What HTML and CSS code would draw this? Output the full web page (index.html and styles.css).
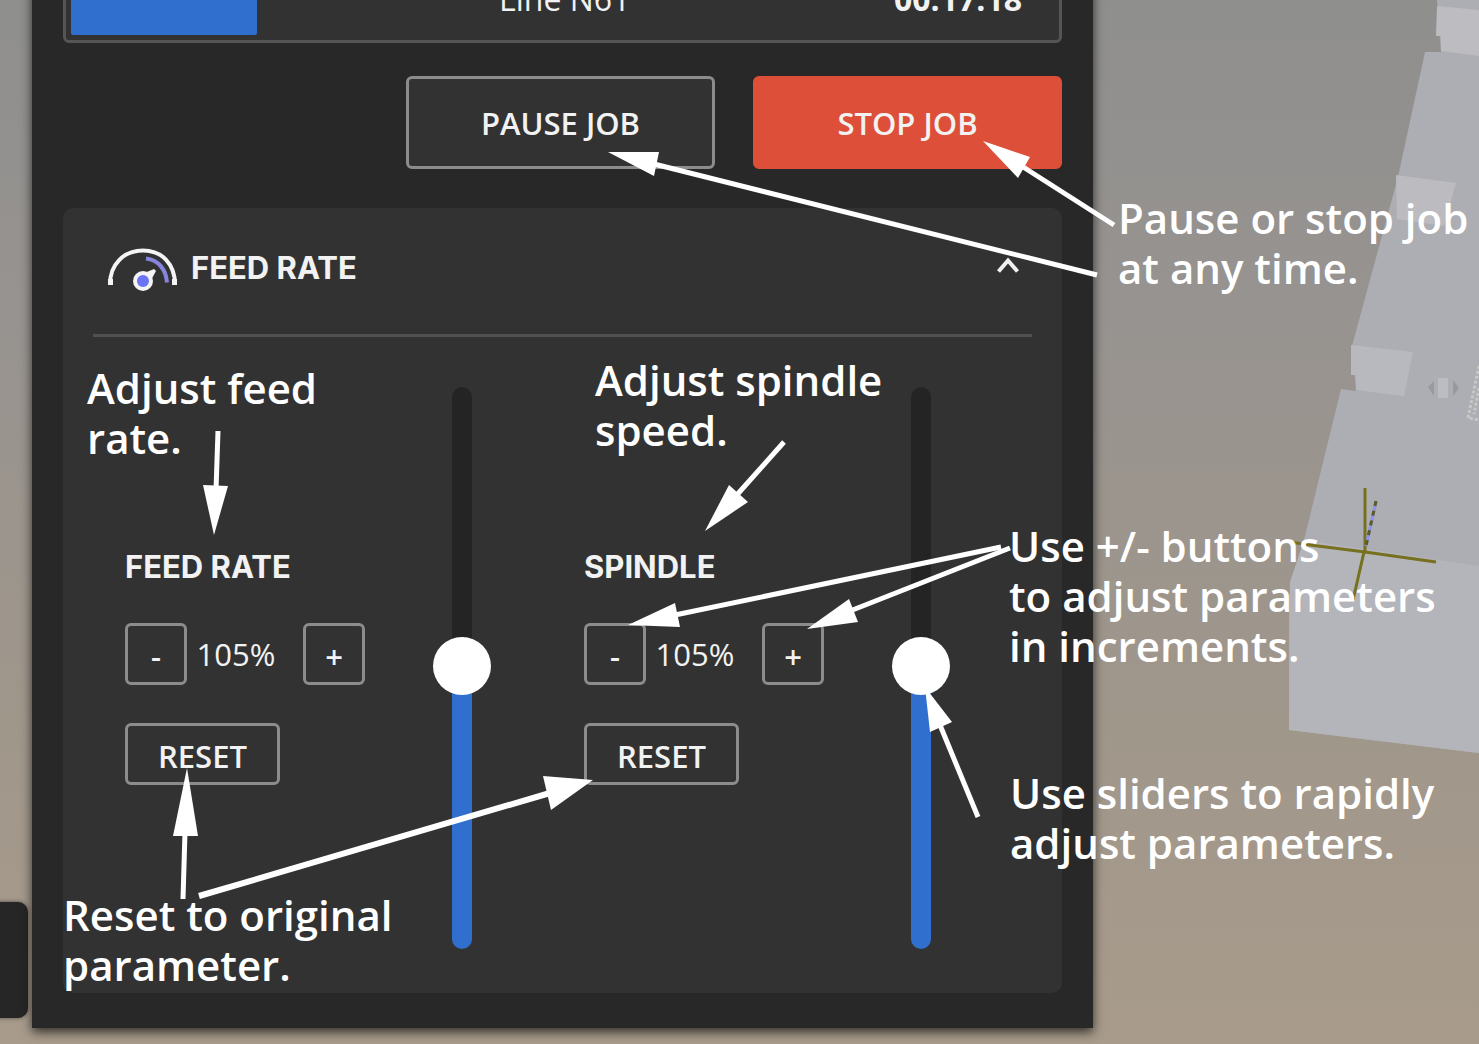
FILE: index.html
```html
<!DOCTYPE html>
<html lang="en">
<head>
<meta charset="UTF-8">
<meta name="viewport" content="width=device-width, initial-scale=1.0">
<title>Job Control</title>
<link rel="stylesheet" href="styles.css">
</head>
<body>
  <!-- machine preview behind the panel -->
  <svg class="scene" width="300" height="1044" viewBox="1179 0 300 1044" aria-hidden="true">
    <path fill="#adaeb3" d="M1439 0H1479V753L1289 730V596L1304 540L1341 389L1356 391L1352 346L1398 177L1425 52L1441 52L1437 0Z"/>
    <path fill="#b4b5ba" d="M1290 582L1304 540L1479 566V753L1289 730Z"/>
    <path fill="#bcbcc1" d="M1437 6L1479 10V56L1441 51V36H1436Z"/>
    <path fill="#bbbbc0" d="M1396 175L1456 183L1444 226L1397 219Z"/>
    <path fill="#b8b9be" d="M1351 345L1413 352L1404 396L1356 390V375H1351Z"/>
    <path fill="#98999d" d="M1428 387L1434 381V396ZM1453 380L1459 388L1453 396Z"/>
    <path fill="#bcbdc2" d="M1438 378H1448V398H1438Z"/>
    <path stroke="#c8c8c6" stroke-width="3" stroke-dasharray="3 2" fill="none" d="M1479 366L1468 418L1479 420M1479 388L1474 414"/>
    <path stroke="#76701f" stroke-width="3" fill="none" d="M1365 488V552M1290 542L1310 545L1365 552L1436 562M1364 552L1353 600"/>
    <path stroke="#8b92ee" stroke-width="3" fill="none" d="M1366 546L1376 502"/>
    <path stroke="#5d5a24" stroke-width="3" stroke-dasharray="5 5" fill="none" d="M1376 501L1366 546"/>
  </svg>

  <div class="side-tab"></div>

  <main class="panel">
    <section class="progress">
      <div class="progress-bar"></div>
      <span class="progress-line">Line N61</span>
      <span class="progress-time">00:17:18</span>
    </section>

    <div class="job-buttons">
      <button type="button" class="btn">PAUSE JOB</button>
      <button type="button" class="btn btn-stop">STOP JOB</button>
    </div>

    <section class="card">
      <header class="card-header">
        <svg width="72" height="46" viewBox="0 0 72 46" fill="none" aria-hidden="true">
          <path stroke="#f4f4f4" stroke-width="4" d="M3 39.500C3 19 17 5.500 36 5.500S68 19 68 39.500"/>
          <path stroke="#f4f4f4" stroke-width="5" d="M3.500 34V40M67.500 34V40"/>
          <path stroke="#8784dc" stroke-width="4" d="M39 13.500C52 15 59 25 60 37.500"/>
          <path fill="#f4f4f4" d="M35 29L47 24L49 26L43 37Z"/>
          <circle cx="36" cy="36" r="10" fill="#f4f4f4"/>
          <circle cx="36" cy="36" r="6" fill="#6a74f5"/>
        </svg>
        <h2>FEED RATE</h2>
        <button type="button" class="collapse" aria-label="Collapse">
          <svg width="24" height="24" viewBox="0 0 24 24" fill="none" aria-hidden="true">
            <path stroke="#f0f0f0" stroke-width="4" d="M2.500 15.500L12 4.500L21.500 15.500"/>
          </svg>
        </button>
      </header>

      <div class="controls">
        <div class="control">
          <div class="settings">
            <label class="title" for="feedRate">FEED RATE</label>
            <div class="stepper">
              <button type="button" class="btn step">-</button>
              <output for="feedRate">105%</output>
              <button type="button" class="btn step">+</button>
            </div>
            <button type="button" class="btn reset">RESET</button>
          </div>
          <input type="range" class="slider" id="feedRate" min="0" max="208" value="105">
        </div>
        <div class="control">
          <div class="settings">
            <label class="title" for="spindle">SPINDLE</label>
            <div class="stepper">
              <button type="button" class="btn step">-</button>
              <output for="spindle">105%</output>
              <button type="button" class="btn step">+</button>
            </div>
            <button type="button" class="btn reset">RESET</button>
          </div>
          <input type="range" class="slider" id="spindle" min="0" max="208" value="105">
        </div>
      </div>
    </section>
  </main>

  <!-- help notes and their arrows -->
  <svg class="arrows" width="1479" height="1044" viewBox="0 0 1479 1044" aria-hidden="true">
    <g stroke="#fff" stroke-width="5">
      <path d="M1097 275L650 163"/>
      <path d="M1114 225L1020 165"/>
      <path d="M218 431L216 490"/>
      <path d="M784 442L735 497"/>
      <path d="M1001 547L675 615"/>
      <path d="M1010 548L850 611"/>
      <path d="M978 817L940 725"/>
      <path d="M183 899L185 832"/>
      <path stroke-width="6" d="M199 896L550 793"/>
    </g>
    <g fill="#fff">
      <path d="M608 152L659 152L654 176Z"/>
      <path d="M983 141L1030 157L1018 178Z"/>
      <path d="M214 535L203 485L228 486Z"/>
      <path d="M705 531L729 485L748 502Z"/>
      <path d="M628 625L675 603L680 627Z"/>
      <path d="M807 629L849 599L858 622Z"/>
      <path d="M925 687L952 722L930 732Z"/>
      <path d="M187 768L198 836L173 836Z"/>
      <path d="M593 780L543 776L551 810Z"/>
    </g>
  </svg>
  <p class="note note-job">Pause or stop job<br>at any time.</p>
  <p class="note note-feed">Adjust feed<br>rate.</p>
  <p class="note note-spindle">Adjust spindle<br>speed.</p>
  <p class="note note-step">Use +/- buttons<br>to adjust parameters<br>in increments.</p>
  <p class="note note-slider">Use sliders to rapidly<br>adjust parameters.</p>
  <p class="note note-reset">Reset to original<br>parameter.</p>
</body>
</html>
```

FILE: styles.css
```css
* {
  box-sizing: border-box;
}
body {
  position: relative;
  margin: 0;
  min-height: 100vh;
  overflow: hidden;
  background: linear-gradient(#8f8f8e, #979390 30%, #a0978b 70%, #a89b8b);
  font-family: "Open Sans", "Noto Sans", sans-serif;
  font-size: 31px;
  color: #f2f2f2;
}
.scene {
  position: absolute;
  top: 0;
  right: 0;
}
.side-tab {
  position: absolute;
  left: -20px;
  top: 902px;
  width: 48px;
  height: 116px;
  border-radius: 10px;
  background: #262626;
  box-shadow: 0 0 4px rgba(0, 0, 0, 0.5);
}
.panel {
  position: relative;
  margin: -60px 386px 0 32px;
  padding: 0 31px 35px;
  background: #282828;
  box-shadow: 0 4px 10px rgba(0, 0, 0, 0.7);
}

/* progress */
.progress {
  display: flex;
  align-items: flex-end;
  height: 103px;
  padding: 5px;
  border: 3px solid #555;
  border-radius: 6px;
  background: #323232;
  font-size: 32px;
  line-height: 72px;
}
.progress-bar {
  width: 186px;
  height: 100%;
  border-radius: 2px;
  background: #306fce;
}
.progress-line {
  flex: 1;
  margin-left: 242px;
}
.progress-time {
  margin-right: 32px;
  font-weight: 700;
}

/* buttons */
.btn {
  border: 3px solid #8c8c8c;
  border-radius: 6px;
  background: #323232;
  color: #f2f2f2;
  font: 600 31px "Open Sans", "Noto Sans", sans-serif;
  padding: 0;
}
.job-buttons {
  display: flex;
  justify-content: flex-end;
  gap: 38px;
  margin: 33px 0 39px;
}
.job-buttons .btn {
  width: 309px;
  height: 93px;
}
.job-buttons .btn-stop {
  border-color: #dd4f38;
  background: #dd4f38;
}

/* feed rate card */
.card {
  padding: 0 30px 44px;
  border-radius: 10px;
  background: #323232;
}
.card-header {
  display: flex;
  align-items: center;
  height: 129px;
  padding: 0 12px 6px 14px;
  border-bottom: 3px solid #505050;
}
.card-header h2,
.title {
  margin: 0;
  font: 700 31px/40px Inter, sans-serif;
}
.card-header h2 {
  flex: 1;
  margin-left: 12px;
}
.collapse {
  display: flex;
  padding: 0;
  border: 0;
  background: none;
}
.controls {
  display: grid;
  grid-template-columns: 1fr 1fr;
  gap: 93px;
  padding: 50px 82px 0 32px;
}
.control {
  display: flex;
  justify-content: space-between;
}
.settings {
  padding-top: 158px;
}
.stepper {
  display: flex;
  align-items: center;
  justify-content: space-between;
  width: 240px;
  margin: 36px 0 38px;
}
.stepper output {
  margin-right: 18px;
}
.step,
.reset {
  width: 62px;
  height: 62px;
  padding-top: 4px;
}
.reset {
  width: 155px;
}
.slider {
  appearance: none;
  writing-mode: vertical-lr;
  direction: rtl;
  width: 58px;
  height: 562px;
  margin: 0;
  background: none;
}
.slider::-webkit-slider-runnable-track {
  width: 20px;
  border-radius: 10px;
  background: linear-gradient(#242424 50%, #306fce 50%);
}
.slider::-webkit-slider-thumb {
  appearance: none;
  width: 58px;
  height: 58px;
  margin-left: -19px;
  border-radius: 50%;
  background: #fff;
}

/* notes */
.arrows {
  position: absolute;
  left: 0;
  top: 0;
}
.note {
  position: absolute;
  margin: 0;
  color: #fff;
  font-size: 42px;
  font-weight: 600;
  line-height: 50px;
  white-space: nowrap;
}
.note-job {
  left: 1118px;
  top: 193px;
}
.note-feed {
  left: 87px;
  top: 363px;
}
.note-spindle {
  left: 595px;
  top: 355px;
}
.note-step {
  left: 1009px;
  top: 521px;
}
.note-slider {
  left: 1010px;
  top: 768px;
}
.note-reset {
  left: 63px;
  top: 890px;
}
```
